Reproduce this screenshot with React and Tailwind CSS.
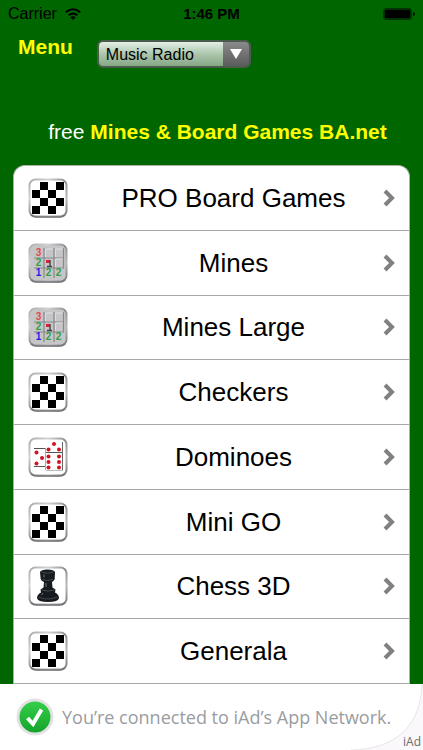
import { useState } from 'react'

const games = [
  { name: 'PRO Board Games', icon: 'board' },
  { name: 'Mines', icon: 'mines' },
  { name: 'Mines Large', icon: 'mines' },
  { name: 'Checkers', icon: 'board' },
  { name: 'Dominoes', icon: 'dominoes' },
  { name: 'Mini GO', icon: 'board' },
  { name: 'Chess 3D', icon: 'rook' },
  { name: 'Generala', icon: 'board' },
]

function BoardArt() {
  return (
    <g>
      <rect x="4" y="4" width="32" height="32" fill="#fff" />
      <path
        fill="#000"
        d="M12 4h8v8h-8zM28 4h8v8h-8zM4 12h8v8H4zM20 12h8v8h-8zM12 20h8v8h-8zM28 20h8v8h-8zM4 28h8v8H4zM20 28h8v8h-8z"
      />
    </g>
  )
}

function MinesArt() {
  return (
    <g>
      <rect x="2" y="2" width="36" height="36" rx="6" fill="#c6c6c8" />
      <path d="M16 5v30M26 5v30M6 15h30M6 25h30M35.500 5v20" stroke="#88888c" strokeWidth="1.200" />
      <path d="M17.500 14V6h7.500M27.500 14V6h7.500M27.500 24v-8h7.500" fill="none" stroke="#dededf" strokeWidth="1" />
      <rect x="18" y="17" width="4" height="3" fill="#d32533" />
      <path d="M22 17v6M19 23.500h5" stroke="#444" strokeWidth="1.400" />
      <g fontFamily="Liberation Sans, sans-serif" fontWeight="bold" fontSize="10" textAnchor="middle">
        <text x="10.500" y="13" fill="#e24a4a">3</text>
        <text x="10.500" y="23" fill="#2fa043">2</text>
        <text x="10.500" y="33" fill="#2222dd">1</text>
        <text x="20.500" y="33" fill="#2fa043">2</text>
        <text x="30.500" y="33" fill="#2fa043">2</text>
      </g>
    </g>
  )
}

const pips = [
  [26, 7], [20.5, 12.5], [31, 12.5],
  [8.5, 15.5], [14, 21], [8.5, 26.5],
  [20.5, 19.5], [31, 19.5], [20.5, 25], [31, 25], [20.5, 30.5], [31, 30.5],
]

function DominoesArt() {
  return (
    <g>
      <path d="M6 11.500h11M6 29.500h11M18 15.500h17" stroke="#555" strokeWidth="1.200" />
      <path d="M17.500 11v22" stroke="#aaa" strokeWidth="1" />
      <path d="M34.500 5v28" stroke="#666" strokeWidth="1" />
      <path d="M18 33.500h17" stroke="#bbb" strokeWidth="1" />
      {pips.map(([x, y]) => (
        <circle key={`${x}-${y}`} cx={x} cy={y} r="2" fill="#d3121f" />
      ))}
    </g>
  )
}

function RookArt() {
  return (
    <g>
      <path
        fill="#171b20"
        d="M12 6q1-2.500 7.500-2.500T27 6l-.3 7q-.7 2-2.700 3l.5 5.500 3 2-.5 3q4 2 4 5.500-.5 4-11 4T9 32q0-3.500 4-5.500l-.5-3 3-2L16 16q-3-1-3.300-3z"
      />
      <path d="M13.500 6q6 2.500 12 0M14 13.500q5.500 2 11 0M13.500 24q6.500 2 13 0M10.500 31q9 4 19 0" fill="none" stroke="#414a53" strokeWidth="1" />
      <path d="M16 8.500v3M18 17v4M15 27l-1.500 2" stroke="#5d6771" strokeWidth="1.200" />
    </g>
  )
}

const art = { board: BoardArt, mines: MinesArt, dominoes: DominoesArt, rook: RookArt }

function GameIcon({ icon }) {
  const Art = art[icon]
  return (
    <svg className="size-10 shrink-0" viewBox="0 0 40 40" aria-hidden="true">
      <defs>
        <linearGradient id="chrome" x1="0" y1="0" x2="1" y2="1">
          <stop offset="0" stopColor="#aaaaad" />
          <stop offset="0.25" stopColor="#d4d4d6" />
          <stop offset="0.5" stopColor="#8d8d91" />
          <stop offset="0.75" stopColor="#b9b9bc" />
          <stop offset="1" stopColor="#77777b" />
        </linearGradient>
      </defs>
      <rect x="1.500" y="1.500" width="37" height="37" rx="6" fill="#fff" />
      <Art />
      <rect x="1.500" y="1.500" width="37" height="37" rx="6" fill="none" stroke="url(#chrome)" strokeWidth="2" />
      <path d="M3 37q2 2 6 2h22q4 0 6-2" fill="none" stroke="#77777b" strokeWidth="1.500" />
    </svg>
  )
}

function StatusBar() {
  return (
    <div className="grid grid-cols-3 items-center h-7 pl-2 pr-2 text-black">
      <div className="flex items-center gap-2 text-base">
        Carrier
        <svg className="w-4 h-3" viewBox="0 0 16 12" fill="none" stroke="currentColor" strokeWidth="2" aria-hidden="true">
          <path d="M.8 4.300q7.200-6.200 14.400 0M3.600 7.300q4.400-3.600 8.800 0" />
          <path d="M8 12L5.300 9.200q2.700-2 5.400 0z" fill="currentColor" stroke="none" />
        </svg>
      </div>
      <div className="text-center text-[15px] font-bold">1:46 PM</div>
      <svg className="justify-self-end w-8 h-3" viewBox="0 0 32 12" aria-hidden="true">
        <rect x=".5" y=".5" width="28" height="11" rx="2" fill="none" stroke="#063006" />
        <rect x="1.500" y="1.500" width="26" height="9" rx="1" fill="#000" />
        <path d="M30 4q2 .5 2 2t-2 2z" fill="#000" />
      </svg>
    </div>
  )
}

function App() {
  const [station, setStation] = useState('Music Radio')

  return (
    <div className="min-h-screen flex flex-col bg-[#006600] font-['Liberation_Sans',Arial,sans-serif]">
      <StatusBar />

      <header className="flex items-start gap-6 px-[18px] pt-[7px]">
        <a href="#menu" className="text-[21px] leading-6 font-bold text-[#ffff00]">
          Menu
        </a>
        <div className="mt-[5px] flex w-[154px] h-7 rounded-md overflow-hidden border-2 border-[#4c5c4c]">
          <select
            aria-label="Station"
            value={station}
            onChange={(e) => setStation(e.target.value)}
            className="appearance-none flex-1 min-w-0 pl-[7px] pt-px text-base leading-6 text-black bg-linear-to-b from-[#e4efe4] via-[#acc6ac] to-[#86a886] outline-none"
          >
            <option>Music Radio</option>
            <option>News Radio</option>
          </select>
          <div className="w-[26px] flex items-center justify-center bg-linear-to-b from-[#8a8a8a] to-[#5c5c5c]">
            <svg className="w-3 h-[10px]" viewBox="0 0 12 10" fill="#fff" aria-hidden="true">
              <path d="M0 0h12L6 10z" />
            </svg>
          </div>
        </div>
      </header>

      <h1 className="mt-[52px] pl-3 text-center text-[21px] leading-6 text-white">
        free <b className="text-[#ffff00]">Mines &amp; Board Games BA.net</b>
      </h1>

      <ul className="mt-[21px] mx-[13px] flex-1 flex flex-col bg-white rounded-t-xl border border-b-0 border-[#a9b4a9]">
        {games.map((game) => (
          <li key={game.name} className="flex-1 flex border-b border-[#a8a8a8]">
            <a href="#game" className="flex-1 flex items-center pl-[14px] pr-[14px] text-[26px] leading-8 text-black">
              <GameIcon icon={game.icon} />
              <span className="flex-1 pl-4 text-center">{game.name}</span>
              <svg className="w-3 h-[18px] shrink-0" viewBox="0 0 12 18" fill="none" stroke="#808080" strokeWidth="4" aria-hidden="true">
                <path d="M2 2l7 7-7 7" />
              </svg>
            </a>
          </li>
        ))}
      </ul>

      <footer className="relative flex items-center gap-2 h-[66px] pl-4 bg-white overflow-hidden font-['Open_Sans','Noto_Sans',sans-serif]">
        <svg className="absolute right-0 top-0 w-20 h-full" viewBox="0 0 80 66" aria-hidden="true">
          <path d="M79 0C78 40 55 65 8 66H80V0z" fill="#faf8fa" />
          <path d="M79 0C78 40 55 65 8 66" fill="none" stroke="#e6e6e7" strokeWidth="1" />
        </svg>
        <svg className="size-[38px] shrink-0" viewBox="0 0 38 38" aria-hidden="true">
          <defs>
            <linearGradient id="ok" x1="0" y1="0" x2="0" y2="1">
              <stop offset="0" stopColor="#35cf49" />
              <stop offset="1" stopColor="#16a32c" />
            </linearGradient>
          </defs>
          <circle cx="19" cy="19" r="18.500" fill="#e2e2e2" />
          <circle cx="19" cy="19" r="15.500" fill="url(#ok)" />
          <path d="M11.500 20l5.500 6L25.500 11.500" fill="none" stroke="#fff" strokeWidth="4" />
        </svg>
        <p className="relative text-[18px] leading-6 text-[#9a9c9f] whitespace-nowrap">
          You’re connected to iAd’s App Network.
        </p>
        <span className="absolute right-[2px] bottom-0 text-xs leading-4 text-[#6b6b6b]">iAd</span>
      </footer>
    </div>
  )
}

export default App
